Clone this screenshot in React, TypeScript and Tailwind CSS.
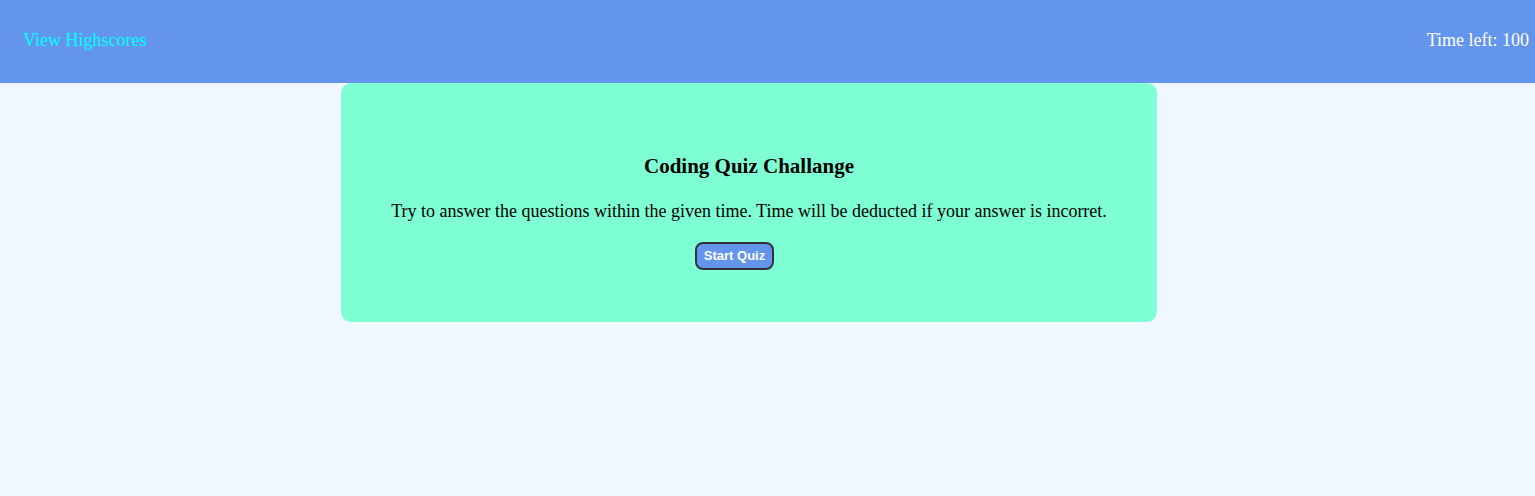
export default function App() {
  return (
    <div className="min-h-[496px] bg-[#f0f8ff] font-['Liberation_Serif',serif]">
      {/* Header */}
      <header className="flex h-[83px] items-center justify-between bg-[#6495ed] pb-[2px] pl-[23px] pr-[6px]">
        <a className="text-[18px] text-[#00ffff]">View Highscores</a>
        <span className="text-[18px] text-white">Time left: 100</span>
      </header>

      {/* Quiz card */}
      <div className="ml-[341px] flex h-[239px] w-[816px] flex-col items-center rounded-[10px] bg-[#7fffd4] pt-[71px] text-black">
        <h1 className="text-[21px] font-bold leading-[24px]">Coding Quiz Challange</h1>
        <p className="mt-[23px] text-[18px] leading-[21px]">
          Try to answer the questions within the given time. Time will be deducted if your answer is incorret.
        </p>
        <button className="mr-[29px] mt-[20px] rounded-[8px] border-2 border-[#333] bg-[#6495ed] px-[7px] py-[4px] font-['Liberation_Sans',sans-serif] text-[13px] font-bold leading-[16px] text-white">
          Start Quiz
        </button>
      </div>
    </div>
  );
}
